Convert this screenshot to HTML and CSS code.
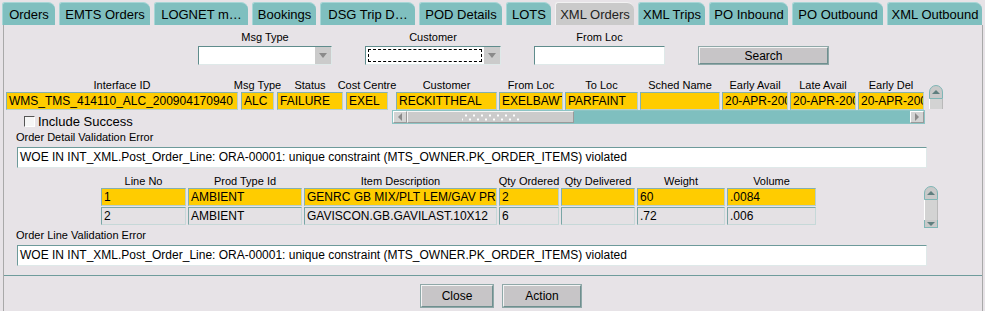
FILE: index.html
```html
<!DOCTYPE html>
<html lang="en">
<head>
    <meta charset="UTF-8">
    <title>XML Orders</title>
    <link rel="stylesheet" href="styles.css">
</head>
<body>
<div class="tabs">
    <div class="tab">Orders</div>
    <div class="tab">EMTS Orders</div>
    <div class="tab">LOGNET m…</div>
    <div class="tab">Bookings</div>
    <div class="tab">DSG Trip D…</div>
    <div class="tab">POD Details</div>
    <div class="tab">LOTS</div>
    <div class="tab active">XML Orders</div>
    <div class="tab">XML Trips</div>
    <div class="tab">PO Inbound</div>
    <div class="tab">PO Outbound</div>
    <div class="tab">XML Outbound</div>
</div>
<div class="panel">
    <div class="filters">
        <div class="field">
            <div class="label">Msg Type</div>
            <div class="combo"><span class="val"></span><span class="drop"></span></div>
        </div>
        <div class="field">
            <div class="label">Customer</div>
            <div class="combo focus"><span class="val"></span><span class="drop"></span></div>
        </div>
        <div class="field">
            <div class="label">From Loc</div>
            <div class="textbox"></div>
        </div>
        <div class="field">
            <button class="btn search">Search</button>
        </div>
    </div>

    <div class="records">
        <div class="block left">
            <div class="head">
                <span>Interface ID</span><span>Msg Type</span><span>Status</span><span>Cost Centre</span>
            </div>
            <div class="row">
                <span class="cell hot">WMS_TMS_414110_ALC_200904170940</span>
                <span class="cell hot">ALC</span>
                <span class="cell hot">FAILURE</span>
                <span class="cell hot">EXEL</span>
            </div>
            <label class="check"><span class="box"></span>Include Success</label>
        </div>
        <div class="block right">
            <div class="head">
                <span>Customer</span><span>From Loc</span><span>To Loc</span><span>Sched Name</span>
                <span>Early Avail</span><span>Late Avail</span><span>Early Del</span>
            </div>
            <div class="row">
                <span class="cell hot">RECKITTHEAL</span>
                <span class="cell hot">EXELBAWTRY</span>
                <span class="cell hot">PARFAINT</span>
                <span class="cell hot"></span>
                <span class="cell hot">20-APR-2009</span>
                <span class="cell hot">20-APR-2009</span>
                <span class="cell hot">20-APR-2009</span>
            </div>
            <div class="hscroll">
                <span class="arrow left"></span>
                <span class="thumb"><i class="grip"></i></span>
                <span class="rest"></span>
                <span class="arrow right"></span>
            </div>
        </div>
        <div class="vscroll top">
            <span class="up"></span>
            <span class="track"></span>
        </div>
    </div>

    <div class="caption">Order Detail Validation Error</div>
    <div class="message">WOE IN INT_XML.Post_Order_Line: ORA-00001: unique constraint (MTS_OWNER.PK_ORDER_ITEMS) violated</div>

    <div class="lines">
        <div class="block items">
            <div class="head">
                <span>Line No</span><span>Prod Type Id</span><span>Item Description</span><span>Qty Ordered</span>
                <span>Qty Delivered</span><span>Weight</span><span>Volume</span>
            </div>
            <div class="row">
                <span class="cell hot">1</span>
                <span class="cell hot">AMBIENT</span>
                <span class="cell hot">GENRC GB MIX/PLT LEM/GAV PR</span>
                <span class="cell hot">2</span>
                <span class="cell hot"></span>
                <span class="cell hot">60</span>
                <span class="cell hot">.0084</span>
            </div>
            <div class="row">
                <span class="cell">2</span>
                <span class="cell">AMBIENT</span>
                <span class="cell">GAVISCON.GB.GAVILAST.10X12</span>
                <span class="cell">6</span>
                <span class="cell"></span>
                <span class="cell">.72</span>
                <span class="cell">.006</span>
            </div>
        </div>
        <div class="vscroll side">
            <span class="up"></span>
            <span class="track"></span>
            <span class="down"></span>
        </div>
    </div>

    <div class="caption">Order Line Validation Error</div>
    <div class="message">WOE IN INT_XML.Post_Order_Line: ORA-00001: unique constraint (MTS_OWNER.PK_ORDER_ITEMS) violated</div>

    <div class="footer">
        <button class="btn close">Close</button>
        <button class="btn action">Action</button>
    </div>
</div>
</body>
</html>
```

FILE: styles.css
```css
*{
    box-sizing: border-box;
    margin: 0;
    padding: 0;
}
body{
    width: 985px;
    height: 311px;
    overflow: hidden;
    background-color: #e7e3e7;
    font-family: "Liberation Sans", Arial, sans-serif;
    font-size: 11px;
    color: #000;
}

/* tab strip */
.tabs{
    display: grid;
    grid-template-columns: 53px 91px 94px 64px 95px 83px 45px 79px 67px 79px 91px 95px;
    column-gap: 4px;
    height: 25px;
    padding: 2px 0 0 2px;
}
.tab{
    height: 23px;
    line-height: 23px;
    text-align: center;
    font-size: 13px;
    white-space: nowrap;
    overflow: hidden;
    background-color: #7fbfbf;
    border-top: 1px solid #a6d6d6;
    border-left: 1px solid #a6d6d6;
    border-radius: 3px 7px 0 0;
}
.tab.active{
    background-color: #cacaca;
    border-color: #f2f2f2;
    color: #222;
}

.panel{
    margin-left: 3px;
    width: 980px;
    height: 286px;
    border-left: 1px solid #a9a9a9;
    border-right: 1px solid #a9a9a9;
}

/* search row */
.filters{
    display: grid;
    grid-template-columns: 134px 136px 131px 130px;
    column-gap: 33px;
    padding: 6px 0 0 194px;
}
.field{
    display: flex;
    flex-direction: column;
    justify-content: flex-end;
}
.label{
    height: 13px;
    line-height: 13px;
    margin-bottom: 2px;
    text-align: center;
}
.combo, .textbox{
    display: flex;
    height: 19px;
    background-color: #fff;
    border: 1px solid;
    border-color: #5f8c8c #dfe9e9 #dfe9e9 #5f8c8c;
}
.combo .val{
    flex: 1;
    margin: 2px;
}
.combo.focus .val{
    border: 1px dashed #000;
}
.combo .drop{
    width: 16px;
    display: flex;
    align-items: center;
    justify-content: center;
    background-color: #cbcbcb;
}
.combo .drop::after{
    content: "";
    border-left: 4px solid transparent;
    border-right: 4px solid transparent;
    border-top: 5px solid #8a8a8a;
}

.btn{
    font-family: "Liberation Sans", Arial, sans-serif;
    font-size: 12px;
    color: #000;
    background-color: #c7c5c7;
    border: 1px solid;
    border-color: #f4f4f4 #6f8f8f #6f8f8f #f4f4f4;
    box-shadow: 0 0 0 1px #8fa8a8;
}
.search{
    height: 17px;
    margin: 0 0 1px 1px;
}

/* record grids */
.records{
    display: flex;
    margin-top: 13px;
    padding-left: 2px;
}
.block .head, .block .row{
    display: grid;
    column-gap: 2px;
}
.left .head, .left .row{
    grid-template-columns: 232px 33px 66px 42px;
    column-gap: 3px;
}
.right{
    width: 533px;
    margin-left: 4px;
}
.right .head, .right .row{
    grid-template-columns: 101px 64px 73px 80px 66px 66px 66px;
    padding-left: 4px;
}
.head{
    height: 14px;
    line-height: 14px;
}
.head span{
    text-align: center;
    white-space: nowrap;
    overflow: visible;
    display: flex;
    justify-content: center;
}
.cell{
    height: 18px;
    line-height: 16px;
    padding: 0 2px;
    font-size: 12px;
    white-space: nowrap;
    overflow: hidden;
    border: 1px solid;
    border-color: #7aa6a6 #c6d8d8 #c6d8d8 #7aa6a6;
    background-color: #e4e1e4;
}
.cell.hot{
    background-color: #ffcc00;
    border-color: #84b0b0 #b7cfcf #b7cfcf #84b0b0;
}

.check{
    display: flex;
    align-items: center;
    gap: 3px;
    height: 14px;
    margin: 4px 0 0 18px;
    font-size: 13px;
}
.check .box{
    width: 11px;
    height: 11px;
    background-color: #f6f6f6;
    border: 1px solid;
    border-color: #555 #fff #fff #555;
}

.hscroll{
    display: flex;
    height: 14px;
    background-color: #7fbfbf;
    border: 1px solid #8cc4c4;
}
.hscroll .arrow{
    width: 14px;
    display: flex;
    align-items: center;
    justify-content: center;
    background-color: #d3d3d3;
    border: 1px solid;
    border-color: #fff #9a9a9a #9a9a9a #fff;
}
.hscroll .left::after{
    content: "";
    border-top: 4px solid transparent;
    border-bottom: 4px solid transparent;
    border-right: 4px solid #8a8a8a;
}
.hscroll .right::after{
    content: "";
    border-top: 4px solid transparent;
    border-bottom: 4px solid transparent;
    border-left: 4px solid #8a8a8a;
}
.hscroll .thumb{
    width: 167px;
    display: flex;
    align-items: center;
    justify-content: center;
    background-color: #cbcbcb;
    border: 1px solid;
    border-color: #f4f4f4 #9a9a9a #9a9a9a #f4f4f4;
}
.grip{
    width: 58px;
    height: 7px;
    background-image: radial-gradient(circle, #fff 0.9px, transparent 1.3px), radial-gradient(circle, #fff 0.9px, transparent 1.3px);
    background-size: 8px 7px;
    background-position: 0 -2px, 4px 2px;
}
.hscroll .rest{
    flex: 1;
}

.vscroll{
    width: 14px;
    display: flex;
    flex-direction: column;
}
.vscroll.top{
    height: 24px;
    margin: 7px 0 0 4px;
}
.vscroll.side{
    height: 42px;
    margin: 11px 0 -3px 108px;
}
.vscroll .up, .vscroll .down{
    display: flex;
    align-items: center;
    justify-content: center;
    background-color: #c9c9c9;
    border: 1px solid #7fb6b6;
}
.vscroll .up{
    height: 14px;
    border-radius: 7px 7px 0 0;
}
.vscroll .up::after{
    content: "";
    border-left: 4px solid transparent;
    border-right: 4px solid transparent;
    border-bottom: 4px solid #5f7f7f;
}
.vscroll .down{
    height: 8px;
    border-top: none;
}
.vscroll .down::after{
    content: "";
    border-left: 4px solid transparent;
    border-right: 4px solid transparent;
    border-top: 4px solid #5f7f7f;
}
.vscroll .track{
    flex: 1;
    background-color: #d3d3d3;
    border-left: 1px solid #fff;
    border-right: 1px solid #b9b9b9;
}

/* validation messages */
.caption{
    height: 12px;
    line-height: 12px;
    margin: 3px 0 0 12px;
}
.message{
    width: 910px;
    height: 21px;
    margin: 4px 0 0 13px;
    padding-left: 2px;
    line-height: 19px;
    font-size: 12px;
    white-space: nowrap;
    background-color: #fff;
    border: 1px solid;
    border-color: #6d9a9a #dfe9e9 #dfe9e9 #6d9a9a;
}

/* order lines */
.lines{
    display: flex;
    margin-top: 7px;
    padding-left: 97px;
}
.items{
    display: flex;
    flex-direction: column;
    row-gap: 1px;
}
.items .head, .items .row{
    grid-template-columns: 85px 114px 193px 60px 74px 88px 89px;
}
.items .head{
    height: 13px;
    line-height: 13px;
    margin-bottom: -1px;
}
.lines + .caption{
    margin-top: 4px;
}

.footer{
    display: flex;
    justify-content: center;
    gap: 10px;
    margin-top: 9px;
    padding: 9px 0 0 16px;
    border-top: 1px solid #6f9c9c;
}
.close{
    width: 72px;
    height: 22px;
}
.action{
    width: 78px;
    height: 22px;
}
```
